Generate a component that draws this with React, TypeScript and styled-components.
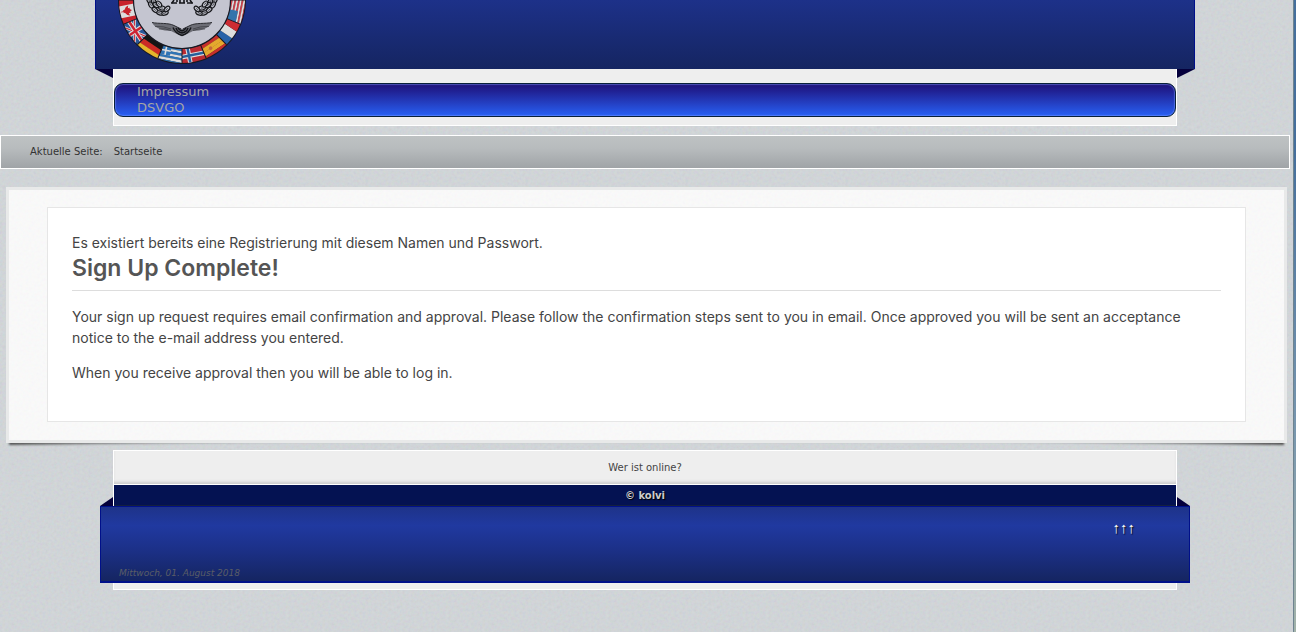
import React from 'react';
import styled, { createGlobalStyle, css } from 'styled-components';

const grain = (alpha: number) =>
  `url("data:image/svg+xml,${encodeURIComponent(
    `<svg xmlns='http://www.w3.org/2000/svg' width='160' height='160'><filter id='n'><feTurbulence type='fractalNoise' baseFrequency='0.35' numOctaves='3' stitchTiles='stitch'/><feComponentTransfer><feFuncA type='linear' slope='0' intercept='${alpha}'/></feComponentTransfer></filter><rect width='160' height='160' filter='url(#n)'/></svg>`,
  )}")`;

const GlobalStyle = createGlobalStyle`
  * { box-sizing: border-box; }
  body {
    margin: 0;
    font-family: 'DejaVu Sans', Verdana, sans-serif;
    color: #444;
  }
`;

const Desktop = styled.div`
  display: flex;
  min-height: 100vh;
  background: ${grain(0.09)}, #d2d7da;
`;

const Page = styled.div`
  flex: 1;
  min-width: 0;
  padding-right: 3px;
`;

const WindowEdge = styled.div`
  width: 3px;
  border-left: 1px solid #6f8490;
  background: linear-gradient(#456f9c 0, #456f9c 150px, #7695ae 420px, #a3b3aa 632px);
`;

const Shell = styled.div<{ $lower?: boolean }>`
  width: calc(100% - 226px);
  max-width: 1064px;
  margin: ${(p) => (p.$lower ? '7px' : '0')} auto 0;
  background: #eee;
  border: 1px solid #fff;
  border-top-width: ${(p) => (p.$lower ? '1px' : '0')};
`;

const ribbon = css`
  position: relative;
  &::before,
  &::after {
    content: '';
    position: absolute;
    width: var(--fold);
    height: 9px;
    background: #05003c;
  }
`;

const Header = styled.header`
  ${ribbon}
  --fold: 18px;
  height: 69px;
  margin: 0 -19px;
  padding-left: 21px;
  border: solid #00108a;
  border-width: 0 1px;
  background: linear-gradient(#1d3189, #152561);
  &::before,
  &::after { top: 100%; }
  &::before { left: -1px; clip-path: polygon(0 0, 100% 0, 100% 100%); }
  &::after { right: -1px; clip-path: polygon(0 0, 100% 0, 0 100%); }
`;

const Emblem = styled.svg`
  display: block;
`;

const Menu = styled.nav`
  display: flex;
  flex-direction: column;
  align-items: flex-start;
  margin: 14px 0 8px;
  padding: 0 22px;
  border: 1px solid #08203a;
  border-radius: 9px;
  background: linear-gradient(#1e0f78, #2860f4);
  box-shadow: inset 0 0 1px 1px rgba(130, 160, 255, 0.45);
`;

const MenuLink = styled.a`
  font-size: 13px;
  line-height: 16px;
  color: #a5a5a5;
  text-decoration: none;
`;

const Breadcrumb = styled.nav`
  display: flex;
  gap: 11px;
  margin-top: 9px;
  padding: 0 29px;
  border: 1px solid #fff;
  background: linear-gradient(#bec2c3, #b7bbbd 40%, #a0a4a7);
  font-size: 10px;
  line-height: 32px;
  color: #333;
`;

const Card = styled.main`
  position: relative;
  margin: 18px 3px 0 6px;
  padding: 17px 38px 18px;
  border: 3px solid #e8e9e9;
  background: ${grain(0.04)}, #fbfbfb;
`;

const CurledShadow = styled.svg`
  position: absolute;
  top: 100%;
  left: -3px;
  width: calc(100% + 6px);
  height: 14px;
  margin-top: 3px;
`;

const Article = styled.article`
  padding: 24px 24px 38px;
  border: 1px solid #e6e6e6;
  background: #fff;
  font-family: Inter, sans-serif;
  font-size: 14px;
  line-height: 21px;
  color: #444;
`;

const Text = styled.p`
  margin: 0 0 14px;
`;

const Notice = styled.p`
  margin: 0;
`;

const Title = styled.h1`
  margin: 0 0 15px;
  padding-bottom: 7px;
  border-bottom: 1px solid #ddd;
  font-size: 23px;
  line-height: 30px;
  font-weight: 600;
  color: #555;
`;

const Online = styled.div`
  padding-top: 1px;
  border-bottom: 1px solid #fff;
  box-shadow: inset 0 -3px 3px -1px #ccc;
  font-size: 10px;
  line-height: 32px;
  text-align: center;
`;

const Copyright = styled.div`
  padding-top: 2px;
  border-bottom: 1px solid #14203f;
  background: #041252;
  color: #ccc;
  font-size: 10px;
  font-weight: bold;
  line-height: 18px;
  text-align: center;
  text-shadow: 1px 1px 1px #000;
`;

const Footer = styled.footer`
  ${ribbon}
  --fold: 13px;
  display: flex;
  flex-direction: column;
  justify-content: space-between;
  height: 77px;
  margin: 0 -14px 6px;
  padding: 13px 54px 1px 18px;
  border: 1px solid #00108a;
  border-bottom-width: 2px;
  background: linear-gradient(#1e3389, #2039a0 25%, #1c318a 55%, #152561);
  &::before,
  &::after { bottom: 100%; margin-bottom: 1px; }
  &::before { left: -1px; clip-path: polygon(100% 0, 100% 100%, 0 100%); }
  &::after { right: -1px; clip-path: polygon(0 0, 100% 100%, 0 100%); }
`;

const TopLink = styled.a`
  align-self: flex-end;
  font-family: 'Liberation Sans', Arial, sans-serif;
  font-size: 15px;
  line-height: 16px;
  font-weight: bold;
  color: #fff;
  text-decoration: none;
  text-shadow: 1px 1px 1px #000;
`;

const DateLine = styled.time`
  font-size: 9px;
  line-height: 14px;
  font-style: italic;
  color: #5a5d66;
`;

const Stripes = ({ colors }: { colors: string[] }) => (
  <>
    {colors.map((c, i) => (
      <rect key={i} x={-14} y={48 + (16 / colors.length) * i} width={28} height={16 / colors.length + 0.2} fill={c} />
    ))}
  </>
);

const flags: { angle: number; art: React.ReactNode }[] = [
  { angle: 101.25, art: <Stripes colors={['#8a7646']} /> },
  {
    angle: 78.75,
    art: (
      <>
        <rect x={-14} y={48} width={28} height={18} fill="#c9222b" />
        <rect x={-6} y={48} width={12} height={18} fill="#ddd" />
        <path
          d="M0 51l1.500 2.200 1-.5v2l2.500-.8-1 2.600-2.600 2 .3 1.200H.4v2.300h-.8v-2.300h-1.300l.3-1.200-2.600-2-1-2.600 2.500.8v-2l1 .5z"
          fill="#c9222b"
        />
      </>
    ),
  },
  {
    angle: 56.25,
    art: (
      <>
        <rect x={-14} y={48} width={28} height={18} fill="#2a5798" />
        <path d="M-12 49L12 65M12 49L-12 65" stroke="#ddd" strokeWidth={2.600} />
        <path d="M-12 49L12 65M12 49L-12 65" stroke="#c23" strokeWidth={1} />
        <path d="M0 48V66M-14 56H14" stroke="#ddd" strokeWidth={4.400} />
        <path d="M0 48V66M-14 56H14" stroke="#c23" strokeWidth={2.400} />
      </>
    ),
  },
  { angle: 33.75, art: <Stripes colors={['#151515', '#cc2b26', '#e5b52c']} /> },
  {
    angle: 11.25,
    art: (
      <>
        <Stripes colors={['#2f74b5', '#ddd', '#2f74b5', '#ddd', '#2f74b5', '#ddd', '#2f74b5']} />
        <rect x={-14} y={48} width={13} height={9} fill="#2f74b5" />
        <path d="M-6 48v9M-14 52.500h13" stroke="#ddd" strokeWidth={1.600} />
      </>
    ),
  },
  {
    angle: -11.25,
    art: (
      <>
        <rect x={-14} y={48} width={28} height={18} fill="#bb2b33" />
        <path d="M-4 48V66M-14 56H14" stroke="#ddd" strokeWidth={4.600} />
        <path d="M-4 48V66M-14 56H14" stroke="#25609c" strokeWidth={2.400} />
      </>
    ),
  },
  {
    angle: -33.75,
    art: (
      <>
        <Stripes colors={['#c62f2b', '#e4a92e', '#e4a92e', '#c62f2b']} />
        <circle cx={-3} cy={56} r={1.800} fill="#c5683a" />
      </>
    ),
  },
  {
    angle: -56.25,
    art: (
      <>
        <rect x={-14} y={48} width={10} height={18} fill="#2862a8" />
        <rect x={-4} y={48} width={8} height={18} fill="#ddd" />
        <rect x={4} y={48} width={10} height={18} fill="#cc2c33" />
      </>
    ),
  },
  {
    angle: -78.75,
    art: (
      <>
        <Stripes colors={['#c8404a', '#ddd', '#c8404a', '#ddd', '#c8404a', '#ddd', '#c8404a', '#ddd', '#c8404a']} />
        <rect x={-14} y={48} width={14} height={9} fill="#3374ac" />
      </>
    ),
  },
  { angle: -101.25, art: <Stripes colors={['#444']} /> },
];

const leaves = [
  [-33, 0, 70], [-31, 5, 60], [-27, 10, 40], [-22, 13, 20], [-17, 13, -20],
  [-28, 2, 60], [-26, 5, 35], [-20, 8, 10], [-15, 9, -40], [-23, 4, 50],
];

const LeafBranch = () => (
  <>
    {leaves.map(([x, y, r]) => (
      <g key={`${x},${y}`} transform={`translate(${x} ${y}) rotate(${r})`}>
        <ellipse rx={3.400} ry={2} fill="#c0c1cb" stroke="#15161a" strokeWidth={1.200} />
        <path d="M-2 0H1" stroke="#15161a" strokeWidth={0.600} />
      </g>
    ))}
  </>
);

const Wing = () => (
  <>
    <path d="M-30 22.500C-23 24-14 22.500-8 25.500L0 29V36L-5 34-11 31C-20 31-27 28-30 22.500z" fill="#6d6e76" />
    <path d="M-30 22.500C-23 24-14 22.500-8 25.500L-1 29" stroke="#2b2c31" strokeWidth={1} fill="none" />
    <path d="M-27 26.500Q-18 26-11 29M-23 29Q-17 28-11 30.500" stroke="#35363c" strokeWidth={0.700} fill="none" />
    <path d="M-9 27.500Q-7 33 0 35.500M-6 28Q-5 32 0 33M-4 28Q-3 30 0 31" stroke="#15161a" strokeWidth={1.400} fill="none" />
  </>
);

const Logo = () => (
  <Emblem width={130} height={66} viewBox="-65 0 130 66" role="img" aria-label="Logo">
    <defs>
      <clipPath id="segment">
        <path d="M-9.600 48.300L-12.300 61.800A63 63 0 0 0 12.300 61.800L9.600 48.300z" />
      </clipPath>
    </defs>
    <circle r={64} fill="#171923" />
    {flags.map((f) => (
      <g key={f.angle} transform={`rotate(${f.angle})`} clipPath="url(#segment)">
        {f.art}
      </g>
    ))}
    {flags.map((f) => (
      <path
        key={f.angle}
        d="M9.600 48.300L12.300 61.800"
        transform={`rotate(${f.angle})`}
        stroke="#171923"
        strokeWidth={1}
      />
    ))}
    <circle r={48.500} fill="#c4c5d0" stroke="#171923" strokeWidth={1.200} />
    <LeafBranch />
    <g transform="scale(-1 1)">
      <LeafBranch />
    </g>
    <path d="M-11 3H-5M5 3H11M-3 3H3" stroke="#15161a" strokeWidth={1.600} />
    <path d="M-8 0L-10 3M8 0L10 3M-2 0V3M2 0V3M-5 0V2M5 0V2" stroke="#15161a" strokeWidth={1.600} />
    <Wing />
    <g transform="scale(-1 1)">
      <Wing />
    </g>
  </Emblem>
);

export default function App() {
  return (
    <>
      <GlobalStyle />
      <Desktop id="top">
        <Page>
          <Shell>
            <Header>
              <Logo />
            </Header>
            <Menu>
              <MenuLink href="#impressum">Impressum</MenuLink>
              <MenuLink href="#dsvgo">DSVGO</MenuLink>
            </Menu>
          </Shell>
          <Breadcrumb>
            <span>Aktuelle Seite:</span>
            <span>Startseite</span>
          </Breadcrumb>
          <Card>
            <CurledShadow viewBox="0 0 1281 14" preserveAspectRatio="none" aria-hidden="true">
              <defs>
                <linearGradient id="curl">
                  <stop offset="0" stopColor="#444" stopOpacity="0.9" />
                  <stop offset="0.12" stopColor="#555" stopOpacity="0.5" />
                  <stop offset="0.4" stopColor="#666" stopOpacity="0.12" />
                  <stop offset="0.6" stopColor="#666" stopOpacity="0.12" />
                  <stop offset="0.88" stopColor="#555" stopOpacity="0.5" />
                  <stop offset="1" stopColor="#444" stopOpacity="0.9" />
                </linearGradient>
                <filter id="soft" x="-1%" y="-100%" width="102%" height="300%">
                  <feGaussianBlur stdDeviation="1.3" />
                </filter>
              </defs>
              <path d="M3 -4H1278V2L1000 -1H281L3 2z" fill="url(#curl)" filter="url(#soft)" />
            </CurledShadow>
            <Article>
              <Notice>Es existiert bereits eine Registrierung mit diesem Namen und Passwort.</Notice>
              <Title>Sign Up Complete!</Title>
              <Text>
                Your sign up request requires email confirmation and approval. Please follow the confirmation steps sent
                to you in email. Once approved you will be sent an acceptance notice to the e-mail address you entered.
              </Text>
              <Notice>When you receive approval then you will be able to log in.</Notice>
            </Article>
          </Card>
          <Shell $lower>
            <Online>Wer ist online?</Online>
            <Copyright>© kolvi</Copyright>
            <Footer>
              <TopLink href="#top">↑↑↑</TopLink>
              <DateLine dateTime="2018-08-01">Mittwoch, 01. August 2018</DateLine>
            </Footer>
          </Shell>
        </Page>
        <WindowEdge />
      </Desktop>
    </>
  );
}
